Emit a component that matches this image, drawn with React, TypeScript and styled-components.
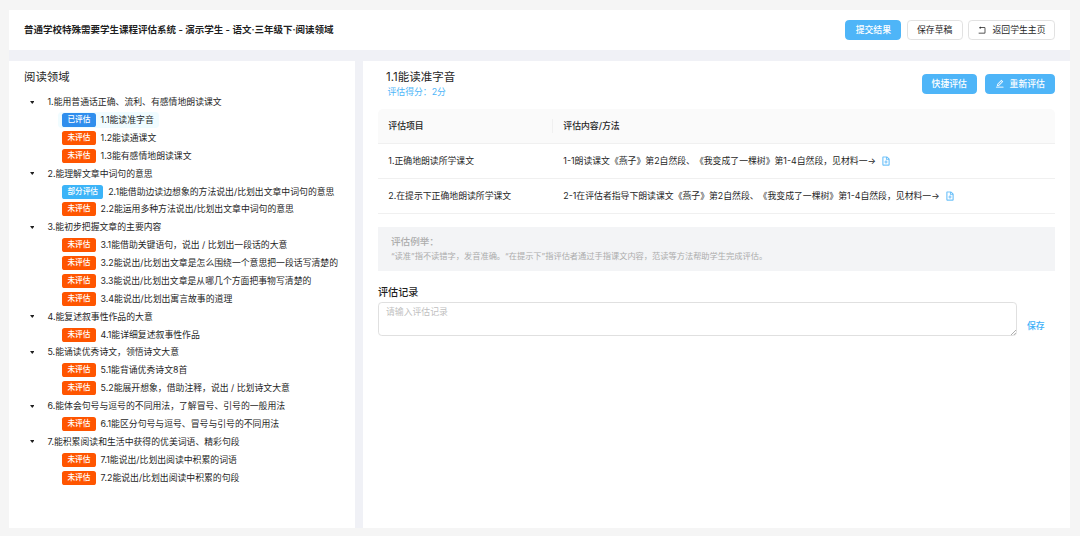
import React from 'react';
import styled, { createGlobalStyle } from 'styled-components';
import { AiOutlineEdit, AiOutlineRollback, AiOutlineFileAdd } from 'react-icons/ai';

const GlobalStyle = createGlobalStyle`
  * { box-sizing: border-box; }
  body {
    margin: 0;
    background: #f5f5f5;
    color: #1f1f1f;
    font-family: Inter, 'Noto Sans CJK SC', sans-serif;
    font-size: 8.86px;
    line-height: 14px;
    text-spacing-trim: space-all;
  }
`;

const Page = styled.div`
  width: 1080px;
  height: 536px;
  padding: 10px 10px 8px 9px;
`;

const Shell = styled.div`
  height: 518px;
  display: flex;
  flex-direction: column;
  gap: 10.5px;
  background: #f0f1f6;
`;

const Header = styled.header`
  height: 40.4px;
  flex: none;
  display: flex;
  align-items: center;
  justify-content: space-between;
  padding: 0 15px;
  background: #fff;
`;

const SystemTitle = styled.h1`
  margin: 0;
  font-size: 9.5px;
  font-weight: 600;
`;

const Actions = styled.div<{ $gap: number }>`
  display: flex;
  gap: ${(p) => p.$gap}px;
`;

const Button = styled.button<{ $primary?: boolean; $width: number }>`
  width: ${(p) => p.$width}px;
  height: 20.4px;
  padding: 0;
  display: flex;
  align-items: center;
  justify-content: center;
  gap: 5px;
  border: 1px solid ${(p) => (p.$primary ? '#4eb5f8' : '#e2e2e2')};
  border-radius: 3.8px;
  background: ${(p) => (p.$primary ? '#4eb5f8' : '#fff')};
  color: ${(p) => (p.$primary ? '#fff' : '#1f1f1f')};
  font: inherit;
  font-weight: ${(p) => (p.$primary ? 500 : 400)};
  white-space: nowrap;

  svg {
    stroke: currentColor;
    stroke-width: ${(p) => (p.$primary ? 18 : 0)}px;
  }
`;

const Columns = styled.div`
  flex: 1;
  min-height: 0;
  display: flex;
  gap: 8px;
`;

const Sidebar = styled.aside`
  width: 346px;
  flex: none;
  padding: 8px 15px;
  background: #fff;
`;

const SidebarTitle = styled.h2`
  margin: 0 0 8.4px;
  font-size: 11.4px;
  font-weight: 400;
  line-height: 16px;
`;

const TreeRow = styled.div`
  height: 17.88px;
  display: flex;
  align-items: center;
  white-space: nowrap;
`;

const Caret = styled.svg`
  width: 4.6px;
  height: 3px;
  margin: 0 13.4px 0 5.5px;
  fill: #1f1f1f;
`;

const Leaf = styled.div<{ $selected?: boolean }>`
  height: 16px;
  margin-left: 33.7px;
  padding: 0 5.5px 0 4.5px;
  display: flex;
  align-items: center;
  gap: 5px;
  border-radius: 3.8px;
  background: ${(p) => (p.$selected ? '#f0fcff' : 'transparent')};
`;

const tagColors = { 已评估: '#2f8eed', 未评估: '#ff5500', 部分评估: '#3cb4f8' };
type Status = keyof typeof tagColors;

const Tag = styled.span<{ $status: Status }>`
  height: 14px;
  padding: 0 5.2px;
  border-radius: 2.6px;
  background: ${(p) => tagColors[p.$status]};
  color: #fff;
  font-size: 7.66px;
  font-weight: 500;
  line-height: 14px;
`;

const Main = styled.main`
  flex: 1;
  padding: 8px 15px;
  background: #fff;
`;

const MainHead = styled.div`
  height: 40px;
  display: flex;
  justify-content: space-between;
  padding: 0 0 0 8px;
`;

const ItemTitle = styled.h2`
  margin: 0;
  font-size: 11.5px;
  font-weight: 400;
  line-height: 16px;
`;

const Score = styled.div`
  padding-left: 1.5px;
  color: #4eb5f8;
`;

const HeadActions = styled(Actions)`
  padding-top: 5px;
`;

const Table = styled.div`
  border-radius: 5px 5px 0 0;
  overflow: hidden;
`;

const TableRow = styled.div<{ $head?: boolean }>`
  height: ${(p) => (p.$head ? 35 : 35.1)}px;
  display: grid;
  grid-template-columns: 175px 1fr;
  align-items: center;
  border-bottom: 1px solid #f0f0f0;
  background: ${(p) => (p.$head ? '#fafafa' : '#fff')};
  font-weight: ${(p) => (p.$head ? 500 : 400)};
`;

const Cell = styled.div<{ $divided?: boolean }>`
  padding-left: 10.3px;
  display: flex;
  align-items: center;
  border-right: ${(p) => (p.$divided ? '1px solid #f0f0f0' : '0')};
  white-space: nowrap;

  svg {
    margin-left: 5px;
    color: #4eb5f8;
    stroke: currentColor;
    stroke-width: 18px;
  }
`;

const Example = styled.section`
  height: 44.5px;
  margin-top: 12.5px;
  padding: 8.5px 13px;
  background: #f3f4f6;
  color: #acacac;
`;

const ExampleTitle = styled.div`
  font-size: 9.6px;
  font-weight: 500;
`;

const ExampleText = styled.div`
  font-size: 8.22px;
`;

const RecordTitle = styled.h3`
  margin: 14px 0 1.7px;
  font-size: 10.1px;
  font-weight: 500;
  line-height: 15px;
`;

const RecordRow = styled.div`
  display: flex;
  align-items: flex-end;
  gap: 10px;
`;

const InputWrap = styled.div`
  position: relative;
  display: flex;
`;

const RecordInput = styled.textarea`
  display: block;
  width: 639px;
  height: 34.5px;
  padding: 2.5px 7px;
  border: 1px solid #e0e0e0;
  border-radius: 3.8px;
  font: inherit;
  line-height: 14px;
  resize: none;

  &::placeholder { color: #bfbfbf; }
`;

const ResizeGrip = styled.svg`
  position: absolute;
  right: 1px;
  bottom: 1px;
  width: 5px;
  height: 5px;
  fill: none;
  stroke: #8c8c8c;
  stroke-width: 0.7px;
`;

const SaveLink = styled.a`
  padding-bottom: 3px;
  color: #40b0f8;
  font-weight: 500;
`;

type Group = { title: string; items: [Status, string][] };

const groups: Group[] = [
  {
    title: '1.能用普通话正确、流利、有感情地朗读课文',
    items: [
      ['已评估', '1.1能读准字音'],
      ['未评估', '1.2能读通课文'],
      ['未评估', '1.3能有感情地朗读课文'],
    ],
  },
  {
    title: '2.能理解文章中词句的意思',
    items: [
      ['部分评估', '2.1能借助边读边想象的方法说出/比划出文章中词句的意思'],
      ['未评估', '2.2能运用多种方法说出/比划出文章中词句的意思'],
    ],
  },
  {
    title: '3.能初步把握文章的主要内容',
    items: [
      ['未评估', '3.1能借助关键语句，说出 / 比划出一段话的大意'],
      ['未评估', '3.2能说出/比划出文章是怎么围绕一个意思把一段话写清楚的'],
      ['未评估', '3.3能说出/比划出文章是从哪几个方面把事物写清楚的'],
      ['未评估', '3.4能说出/比划出寓言故事的道理'],
    ],
  },
  { title: '4.能复述叙事性作品的大意', items: [['未评估', '4.1能详细复述叙事性作品']] },
  {
    title: '5.能诵读优秀诗文，领悟诗文大意',
    items: [
      ['未评估', '5.1能背诵优秀诗文8首'],
      ['未评估', '5.2能展开想象，借助注释，说出 / 比划诗文大意'],
    ],
  },
  {
    title: '6.能体会句号与逗号的不同用法，了解冒号、引号的一般用法',
    items: [['未评估', '6.1能区分句号与逗号、冒号与引号的不同用法']],
  },
  {
    title: '7.能积累阅读和生活中获得的优美词语、精彩句段',
    items: [
      ['未评估', '7.1能说出/比划出阅读中积累的词语'],
      ['未评估', '7.2能说出/比划出阅读中积累的句段'],
    ],
  },
];

const tableRows = [
  ['1.正确地朗读所学课文', '1-1朗读课文《燕子》第2自然段、《我变成了一棵树》第1-4自然段，见材料一→'],
  ['2.在提示下正确地朗读所学课文', '2-1在评估者指导下朗读课文《燕子》第2自然段、《我变成了一棵树》第1-4自然段，见材料一→'],
];

export default function App() {
  return (
    <Page lang="zh-CN">
      <GlobalStyle />
      <Shell>
        <Header>
          <SystemTitle>普通学校特殊需要学生课程评估系统 - 演示学生 - 语文·三年级下·阅读领域</SystemTitle>
          <Actions $gap={5.2}>
            <Button $primary $width={56.2}>提交结果</Button>
            <Button $width={56.2}>保存草稿</Button>
            <Button $width={87}><AiOutlineRollback size={10} />返回学生主页</Button>
          </Actions>
        </Header>
        <Columns>
          <Sidebar>
            <SidebarTitle>阅读领域</SidebarTitle>
            {groups.map((group) => (
              <React.Fragment key={group.title}>
                <TreeRow>
                  <Caret viewBox="0 0 10 7"><path d="M1 0h8q1 0 .5 1L6 6q-1 1-2 0L.5 1Q0 0 1 0z" /></Caret>
                  {group.title}
                </TreeRow>
                {group.items.map(([status, label]) => (
                  <TreeRow key={label}>
                    <Leaf $selected={status === '已评估'}>
                      <Tag $status={status}>{status}</Tag>
                      {label}
                    </Leaf>
                  </TreeRow>
                ))}
              </React.Fragment>
            ))}
          </Sidebar>
          <Main>
            <MainHead>
              <div>
                <ItemTitle>1.1能读准字音</ItemTitle>
                <Score>评估得分：2分</Score>
              </div>
              <HeadActions $gap={8}>
                <Button $primary $width={55.5}>快捷评估</Button>
                <Button $primary $width={70}><AiOutlineEdit size={9.5} />重新评估</Button>
              </HeadActions>
            </MainHead>
            <Table>
              <TableRow $head>
                <Cell $divided>评估项目</Cell>
                <Cell>评估内容/方法</Cell>
              </TableRow>
              {tableRows.map(([item, method]) => (
                <TableRow key={item}>
                  <Cell>{item}</Cell>
                  <Cell>{method}<AiOutlineFileAdd size={10} /></Cell>
                </TableRow>
              ))}
            </Table>
            <Example>
              <ExampleTitle>评估例举：</ExampleTitle>
              <ExampleText>“读准”指不读错字，发音准确。“在提示下”指评估者通过手指课文内容，范读等方法帮助学生完成评估。</ExampleText>
            </Example>
            <RecordTitle>评估记录</RecordTitle>
            <RecordRow>
              <InputWrap>
                <RecordInput placeholder="请输入评估记录" />
                <ResizeGrip viewBox="0 0 5 5"><path d="M0 5L5 0M2.8 5L5 2.8" /></ResizeGrip>
              </InputWrap>
              <SaveLink>保存</SaveLink>
            </RecordRow>
          </Main>
        </Columns>
      </Shell>
    </Page>
  );
}
